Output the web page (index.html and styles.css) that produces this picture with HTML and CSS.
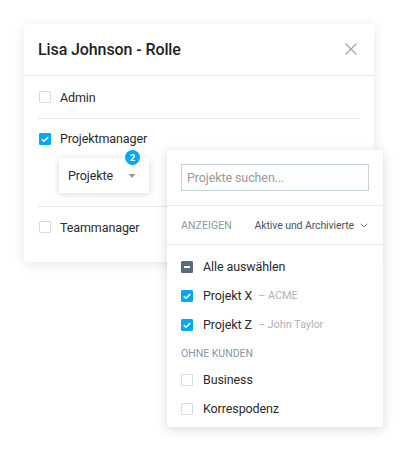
FILE: index.html
```html
<!DOCTYPE html>
<html lang="de">
<head>
<meta charset="utf-8">
<link rel="stylesheet" href="styles.css">
</head>
<body>
<div class="stage">
  <div class="card">
    <div class="card-head">
      <h1 class="title">Lisa Johnson - Rolle</h1>
      <svg class="close" width="12" height="12" viewBox="0 0 12 12"><path d="M0.5 0.5L11.5 11.5M11.5 0.5L0.5 11.5" stroke="#9aa3ab" stroke-width="1.1" fill="none"/></svg>
    </div>
    <div class="card-body">
      <div class="role">
        <div class="check-row role-row"><span class="cb"></span><span>Admin</span></div>
      </div>
      <div class="role">
        <div class="check-row role-row role-row-tight"><span class="cb cb-on"><svg width="12" height="12" viewBox="0 0 12 12"><path d="M2.8 6.2L5 8.3L9.3 3.9" stroke="#fff" stroke-width="1.5" fill="none"/></svg></span><span>Projektmanager</span></div>
        <div class="picker">
          <span>Projekte</span>
          <span class="caret"></span>
          <span class="badge">2</span>
        </div>
      </div>
      <div class="role role-last">
        <div class="check-row role-row"><span class="cb"></span><span>Teammanager</span></div>
      </div>
    </div>
  </div>

  <div class="popup">
    <div class="pop-search">
      <div class="search-input">Projekte suchen...</div>
    </div>
    <div class="pop-show">
      <span class="label">ANZEIGEN</span>
      <span class="show-value">Aktive und Archivierte
        <svg width="8" height="5" viewBox="0 0 8 5"><path d="M0.8 0.8L4 3.9L7.2 0.8" stroke="#6b7580" stroke-width="1" fill="none"/></svg>
      </span>
    </div>
    <div class="pop-list">
      <div class="check-row item"><span class="cb cb-ind"><span class="dash"></span></span><span>Alle auswählen</span></div>
      <div class="check-row item"><span class="cb cb-on"><svg width="12" height="12" viewBox="0 0 12 12"><path d="M2.8 6.2L5 8.3L9.3 3.9" stroke="#fff" stroke-width="1.5" fill="none"/></svg></span><span>Projekt X</span><span class="client">– ACME</span></div>
      <div class="check-row item"><span class="cb cb-on"><svg width="12" height="12" viewBox="0 0 12 12"><path d="M2.8 6.2L5 8.3L9.3 3.9" stroke="#fff" stroke-width="1.5" fill="none"/></svg></span><span>Projekt Z</span><span class="client">– John Taylor</span></div>
      <div class="group">OHNE KUNDEN</div>
      <div class="check-row item"><span class="cb"></span><span>Business</span></div>
      <div class="check-row item"><span class="cb"></span><span>Korrespodenz</span></div>
    </div>
  </div>
</div>
</body>
</html>
```
FILE: styles.css
```css
* { box-sizing: border-box; }
html, body { margin: 0; padding: 0; background: #fff; }
body {
  font-family: Roboto, "Liberation Sans", sans-serif;
  color: #2b2b2b;
  font-size: 12.5px;
  letter-spacing: -0.1px;
}
.stage {
  position: relative;
  width: 407px;
  height: 452px;
  padding: 24px 0 0 24px;
}
.card {
  width: 350px;
  background: #fff;
  border-radius: 3px;
  box-shadow: 0 2px 12px rgba(0, 0, 0, 0.10);
}
.card-head {
  height: 52px;
  padding: 0 17px 1px 14px;
  display: flex;
  align-items: center;
  justify-content: space-between;
  border-bottom: 1px solid #e4eaee;
}
.title {
  margin: 0;
  font-size: 16px;
  font-weight: 500;
  color: #1f1f1f;
  letter-spacing: -0.1px;
}
.card-body {
  padding: 0 14px 15px;
}
.role {
  border-bottom: 1px solid #e4eaee;
}
.role-last { border-bottom: none; }
.check-row {
  display: flex;
  align-items: center;
}
.role-row { height: 42px; }
.role-last .role-row { height: 40px; }
.role-row-tight { height: 39px; }
.cb {
  width: 12px;
  height: 12px;
  margin-right: 10px;
  flex: none;
  border: 1px solid #d6dde2;
  border-radius: 1px;
  background: #fff;
  display: flex;
  align-items: center;
  justify-content: center;
}
.role-row .cb { margin-left: 1px; margin-right: 9px; }
.cb-on {
  background: #03a9f4;
  border-color: #03a9f4;
}
.cb-on svg { flex: none; margin: -1px; }
.cb-ind {
  background: #5a6b7b;
  border-color: #5a6b7b;
}
.dash {
  width: 6px;
  height: 2px;
  background: #fff;
}
.picker {
  position: relative;
  margin: 0 0 13px 21px;
  width: 90px;
  height: 35px;
  padding: 0 14px 0 9px;
  display: flex;
  align-items: center;
  justify-content: space-between;
  background: #fff;
  border-radius: 2px;
  box-shadow: 0 1px 7px rgba(0, 0, 0, 0.16);
}
.caret {
  width: 0;
  height: 0;
  border-left: 3.5px solid transparent;
  border-right: 3.5px solid transparent;
  border-top: 4px solid #8a8f94;
  margin-top: 1px;
}
.badge {
  position: absolute;
  left: 66px;
  top: -8px;
  width: 15px;
  height: 15px;
  border-radius: 50%;
  background: #03a9f4;
  color: #fff;
  font-size: 9px;
  font-weight: 700;
  letter-spacing: 0;
  display: flex;
  align-items: center;
  justify-content: center;
}
.popup {
  position: absolute;
  left: 167px;
  top: 150px;
  width: 216px;
  height: 277px;
  background: #fff;
  border-radius: 3px;
  box-shadow: 0 2px 12px rgba(0, 0, 0, 0.16);
}
.pop-search {
  padding: 14px;
  border-bottom: 1px solid #e4eaee;
}
.search-input {
  height: 27px;
  border: 1px solid #c5d2d9;
  padding-left: 5px;
  display: flex;
  align-items: center;
  color: #9a9a9a;
  font-size: 12.5px;
}
.pop-show {
  height: 39px;
  padding: 0 14px;
  display: flex;
  align-items: center;
  justify-content: space-between;
  border-bottom: 1px solid #e4eaee;
}
.label {
  font-size: 10.5px;
  color: #8797a7;
  letter-spacing: 0.1px;
}
.show-value {
  font-size: 10.5px;
  color: #4a5560;
  display: flex;
  align-items: center;
  gap: 6px;
  margin-right: 1px;
}
.pop-list {
  padding: 7px 14px 0;
}
.item {
  height: 29px;
}
.client {
  margin-left: 6px;
  font-size: 11px;
  color: #b3b3b3;
}
.group {
  height: 26px;
  display: flex;
  align-items: center;
  font-size: 10.5px;
  color: #8797a7;
  letter-spacing: 0;
  padding-top: 2px;
}
```
